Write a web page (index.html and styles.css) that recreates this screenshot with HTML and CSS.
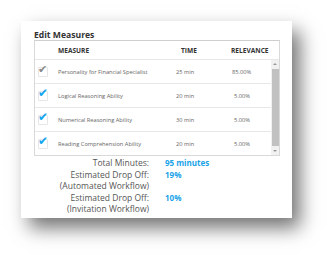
FILE: index.html
```html
<!DOCTYPE html>
<html>
<head>
<meta charset="utf-8">
<link rel="stylesheet" href="styles.css">
</head>
<body>
<div class="card">
  <div class="title">Edit Measures</div>
  <div class="table">
    <div class="thead">
      <div class="c-check"></div>
      <div class="c-measure">MEASURE</div>
      <div class="c-time">TIME</div>
      <div class="c-rel">RELEVANCE</div>
    </div>
    <div class="tbody">
      <div class="rows">
        <div class="row">
          <div class="c-check"><span class="box"></span><span class="tick gray">&#10004;</span></div>
          <div class="c-measure">Personality for Financial Specialist</div>
          <div class="c-time">25 min</div>
          <div class="c-rel">85.00%</div>
        </div>
        <div class="row">
          <div class="c-check"><span class="box"></span><span class="tick">&#10004;</span></div>
          <div class="c-measure">Logical Reasoning Ability</div>
          <div class="c-time">20 min</div>
          <div class="c-rel r2">5.00%</div>
        </div>
        <div class="row">
          <div class="c-check"><span class="box"></span><span class="tick">&#10004;</span></div>
          <div class="c-measure">Numerical Reasoning Ability</div>
          <div class="c-time">30 min</div>
          <div class="c-rel r2">5.00%</div>
        </div>
        <div class="row last">
          <div class="c-check"><span class="box"></span><span class="tick">&#10004;</span></div>
          <div class="c-measure">Reading Comprehension Ability</div>
          <div class="c-time">20 min</div>
          <div class="c-rel r2">5.00%</div>
        </div>
      </div>
      <div class="scrollbar">
        <div class="arrow up"></div>
        <div class="thumb"></div>
        <div class="arrow down"></div>
      </div>
    </div>
  </div>
  <div class="summary">
    <div class="label">Total Minutes:</div><div class="value">95 minutes</div>
    <div class="label">Estimated Drop Off:<br>(Automated Workflow)</div><div class="value">19%</div>
    <div class="label">Estimated Drop Off:<br>(Invitation Workflow)</div><div class="value">10%</div>
  </div>
</div>
</body>
</html>
```
FILE: styles.css
```css
html, body {
  margin: 0;
  padding: 0;
  background: #ffffff;
}
body {
  width: 334px;
  height: 261px;
  overflow: hidden;
  font-family: "Open Sans", "Noto Sans", sans-serif;
}
.card {
  margin: 21px 0 0 21px;
  width: 271px;
  height: 197px;
  box-sizing: border-box;
  background: #fff;
  padding: 9px 12px 0 13px;
  box-shadow: 8px 10px 18px rgba(0,0,0,0.55);
}
.title {
  font-weight: bold;
  font-size: 8.6px;
  line-height: 10px;
  color: #333;
}
.table {
  border: 1px solid #d9d9d9;
  border-top: 1.5px solid #cfcfcf;
  background: #fff;
}
.thead {
  display: flex;
  align-items: center;
  height: 18px;
  border-bottom: 1px solid #e8e8e8;
  font-size: 6.6px;
  font-weight: bold;
  color: #333;
}
.thead .c-time { width: 50px; padding-left: 5px; }
.tbody {
  display: flex;
}
.rows {
  flex: 1;
}
.row {
  display: flex;
  align-items: center;
  height: 23px;
  border-bottom: 1px solid #e8e8e8;
  font-size: 5.7px;
  color: #666;
}
.row.last { border-bottom: none; height: 23px; }
.c-check {
  width: 23px;
  flex: none;
  position: relative;
  height: 100%;
}
.thead .c-check { height: 18px; }
.c-measure { width: 118px; flex: none; }
.c-time { width: 56px; flex: none; }
.c-rel { flex: none; }
.r2 { padding-left: 2px; }
.box {
  position: absolute;
  left: 3px;
  top: 7px;
  width: 8px;
  height: 8px;
  border: 1px solid #e6e6e6;
  border-radius: 1px;
}
.tick {
  position: absolute;
  left: 3px;
  top: 1px;
  font-size: 12px;
  line-height: 15px;
  color: #10a5f0;
}
.tick.gray { color: #8a8a8a; font-size: 11px; }
.scrollbar {
  width: 8px;
  flex: none;
  background: #f1f1f1;
  display: flex;
  flex-direction: column;
  align-items: center;
}
.arrow {
  height: 9px;
  width: 8px;
  position: relative;
}
.arrow::after {
  content: "";
  position: absolute;
  left: 2px;
  border-left: 2px solid transparent;
  border-right: 2px solid transparent;
}
.arrow.up::after { top: 3px; border-bottom: 2px solid #9a9a9a; }
.arrow.down::after { top: 4px; border-top: 2px solid #9a9a9a; }
.thumb {
  flex: 1;
  width: 7px;
  background: #c1c1c1;
}
.summary {
  display: grid;
  grid-template-columns: 115px auto;
  column-gap: 16px;
  row-gap: 0;
  margin-top: 1px;
  font-size: 8.5px;
  line-height: 11.5px;
}
.label {
  text-align: right;
  color: #555;
}
.value {
  color: #1aa3e8;
  font-weight: bold;
  font-size: 8px;
}
```
